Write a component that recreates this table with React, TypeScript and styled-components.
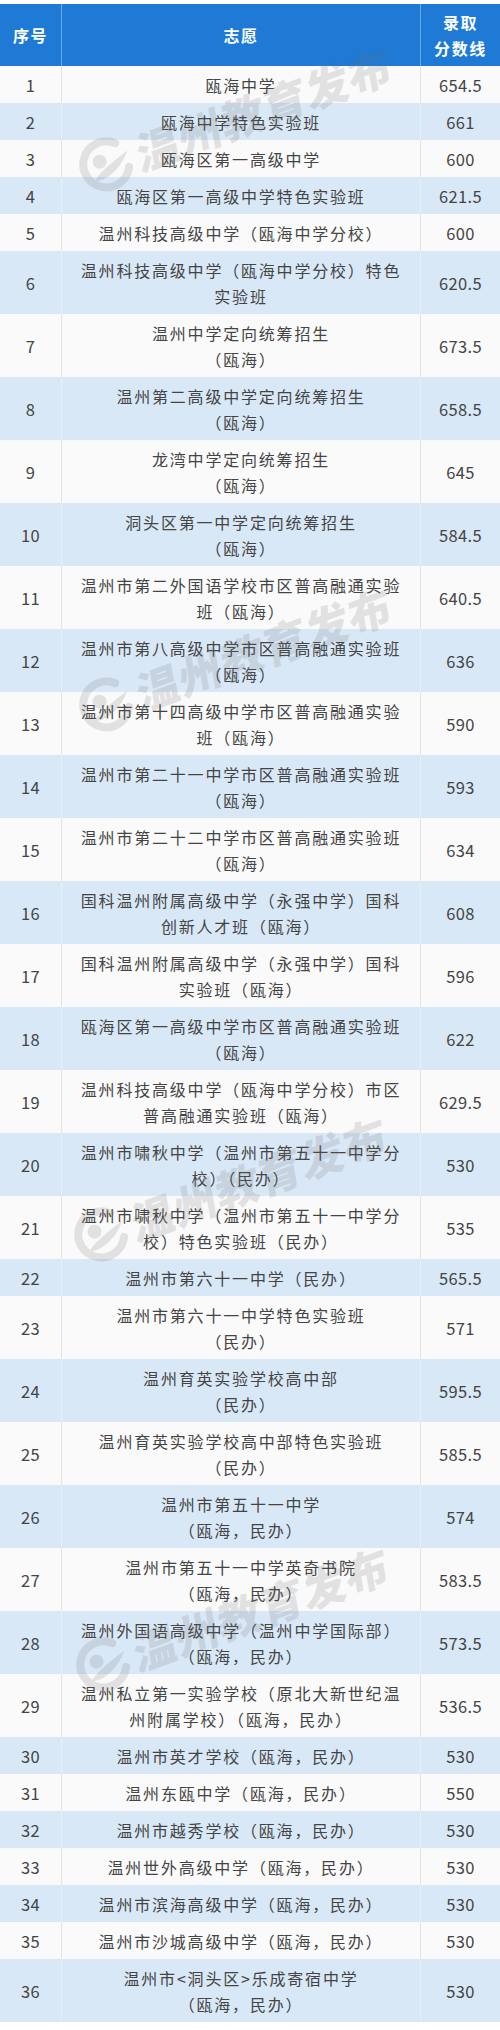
import React from "react";
import styled, { createGlobalStyle } from "styled-components";

const Global = createGlobalStyle`
  html, body { margin: 0; padding: 0; background: #ffffff; }
  body { font-family: "Noto Sans CJK SC", "Noto Sans", sans-serif; }
`;

type Item = { no: number; lines: string[]; score: string };

const data: Item[] = [
  { no: 1, lines: ["瓯海中学"], score: "654.5" },
  { no: 2, lines: ["瓯海中学特色实验班"], score: "661" },
  { no: 3, lines: ["瓯海区第一高级中学"], score: "600" },
  { no: 4, lines: ["瓯海区第一高级中学特色实验班"], score: "621.5" },
  { no: 5, lines: ["温州科技高级中学（瓯海中学分校）"], score: "600" },
  { no: 6, lines: ["温州科技高级中学（瓯海中学分校）特色", "实验班"], score: "620.5" },
  { no: 7, lines: ["温州中学定向统筹招生", "（瓯海）"], score: "673.5" },
  { no: 8, lines: ["温州第二高级中学定向统筹招生", "（瓯海）"], score: "658.5" },
  { no: 9, lines: ["龙湾中学定向统筹招生", "（瓯海）"], score: "645" },
  { no: 10, lines: ["洞头区第一中学定向统筹招生", "（瓯海）"], score: "584.5" },
  { no: 11, lines: ["温州市第二外国语学校市区普高融通实验", "班（瓯海）"], score: "640.5" },
  { no: 12, lines: ["温州市第八高级中学市区普高融通实验班", "（瓯海）"], score: "636" },
  { no: 13, lines: ["温州市第十四高级中学市区普高融通实验", "班（瓯海）"], score: "590" },
  { no: 14, lines: ["温州市第二十一中学市区普高融通实验班", "（瓯海）"], score: "593" },
  { no: 15, lines: ["温州市第二十二中学市区普高融通实验班", "（瓯海）"], score: "634" },
  { no: 16, lines: ["国科温州附属高级中学（永强中学）国科", "创新人才班（瓯海）"], score: "608" },
  { no: 17, lines: ["国科温州附属高级中学（永强中学）国科", "实验班（瓯海）"], score: "596" },
  { no: 18, lines: ["瓯海区第一高级中学市区普高融通实验班", "（瓯海）"], score: "622" },
  { no: 19, lines: ["温州科技高级中学（瓯海中学分校）市区", "普高融通实验班（瓯海）"], score: "629.5" },
  { no: 20, lines: ["温州市啸秋中学（温州市第五十一中学分", "校）（民办）"], score: "530" },
  { no: 21, lines: ["温州市啸秋中学（温州市第五十一中学分", "校）特色实验班（民办）"], score: "535" },
  { no: 22, lines: ["温州市第六十一中学（民办）"], score: "565.5" },
  { no: 23, lines: ["温州市第六十一中学特色实验班", "（民办）"], score: "571" },
  { no: 24, lines: ["温州育英实验学校高中部", "（民办）"], score: "595.5" },
  { no: 25, lines: ["温州育英实验学校高中部特色实验班", "（民办）"], score: "585.5" },
  { no: 26, lines: ["温州市第五十一中学", "（瓯海，民办）"], score: "574" },
  { no: 27, lines: ["温州市第五十一中学英奇书院", "（瓯海，民办）"], score: "583.5" },
  { no: 28, lines: ["温州外国语高级中学（温州中学国际部）", "（瓯海，民办）"], score: "573.5" },
  { no: 29, lines: ["温州私立第一实验学校（原北大新世纪温", "州附属学校）（瓯海，民办）"], score: "536.5" },
  { no: 30, lines: ["温州市英才学校（瓯海，民办）"], score: "530" },
  { no: 31, lines: ["温州东瓯中学（瓯海，民办）"], score: "550" },
  { no: 32, lines: ["温州市越秀学校（瓯海，民办）"], score: "530" },
  { no: 33, lines: ["温州世外高级中学（瓯海，民办）"], score: "530" },
  { no: 34, lines: ["温州市滨海高级中学（瓯海，民办）"], score: "530" },
  { no: 35, lines: ["温州市沙城高级中学（瓯海，民办）"], score: "530" },
  { no: 36, lines: ["温州市<洞头区>乐成寄宿中学", "（瓯海，民办）"], score: "530" },
];

const Page = styled.div`
  position: relative;
  padding-top: 4px;
  width: 500px;
  overflow: hidden;
`;

const Table = styled.div`
  display: flex;
  flex-direction: column;
`;

const HeaderRow = styled.div`
  display: grid;
  grid-template-columns: 62px 1fr 79px;
  background: #1e7ad5;
  height: 62px;
`;

const HeadCell = styled.div<{ $last?: boolean }>`
  display: flex;
  flex-direction: column;
  align-items: center;
  justify-content: center;
  color: #ffffff;
  font-weight: 700;
  font-size: 16px;
  line-height: 26px;
  letter-spacing: 1.6px;
  border-right: ${(p) => (p.$last ? "none" : "1px solid #6aa8e4")};
`;

const Row = styled.div<{ $alt: boolean }>`
  display: grid;
  grid-template-columns: 62px 1fr 79px;
  background: ${(p) => (p.$alt ? "#d9e8f7" : "#fafafa")};
  --line: ${(p) => (p.$alt ? "#e6f0fa" : "#e4e4e4")};
`;

const Cell = styled.div<{ $last?: boolean }>`
  display: flex;
  flex-direction: column;
  align-items: center;
  justify-content: center;
  padding: 5.5px 14px;
  color: #444444;
  font-size: 16px;
  line-height: 26px;
  letter-spacing: 1.8px;
  text-align: center;
  white-space: nowrap;
  border-right: ${(p) => (p.$last ? "none" : "1px solid var(--line)")};
`;

const NumCell = styled(Cell)`
  padding: 5.5px 0;
  letter-spacing: 0.4px;
  font-size: 16.5px;
`;

const WatermarkBox = styled.div`
  position: absolute;
  display: flex;
  align-items: center;
  gap: 4px;
  transform-origin: 30px 30px;
  transform: rotate(-20deg);
  pointer-events: none;
  opacity: 0.17;
  color: #6e6e6e;
`;

const WatermarkText = styled.span`
  font-family: "Noto Sans CJK SC", sans-serif;
  font-weight: 900;
  font-size: 44px;
  line-height: 48px;
  letter-spacing: 1px;
  white-space: nowrap;
  display: inline-block;
  transform: skewX(-10deg);
`;

const Logo = () => (
  <svg width="60" height="60" viewBox="0 0 60 60" fill="none">
    <path d="M47 13 A23 23 0 1 0 52 40" stroke="#6e6e6e" strokeWidth="8" strokeLinecap="round" />
    <circle cx="26" cy="25" r="7" fill="#6e6e6e" />
    <path d="M14 42 C24 34 38 30 56 24 C46 36 30 46 14 42 Z" fill="#6e6e6e" />
  </svg>
);

const Watermark = ({ cx, cy }: { cx: number; cy: number }) => (
  <WatermarkBox style={{ left: cx - 30, top: cy - 30 }}>
    <Logo />
    <WatermarkText>温州教育发布</WatermarkText>
  </WatermarkBox>
);

const marks = [
  { cx: 105, cy: 165 },
  { cx: 105, cy: 705 },
  { cx: 100, cy: 1235 },
  { cx: 102, cy: 1665 },
];

export default function App() {
  return (
    <>
      <Global />
      <Page>
        <Table>
          <HeaderRow>
            <HeadCell>序号</HeadCell>
            <HeadCell>志愿</HeadCell>
            <HeadCell $last>
              <span>录取</span>
              <span>分数线</span>
            </HeadCell>
          </HeaderRow>
          {data.map((d) => (
            <Row key={d.no} $alt={d.no % 2 === 0}>
              <NumCell>{d.no}</NumCell>
              <Cell>
                {d.lines.map((l, i) => (
                  <span key={i}>{l}</span>
                ))}
              </Cell>
              <NumCell $last>{d.score}</NumCell>
            </Row>
          ))}
        </Table>
        {marks.map((m, i) => (
          <Watermark key={i} cx={m.cx} cy={m.cy} />
        ))}
      </Page>
    </>
  );
}
